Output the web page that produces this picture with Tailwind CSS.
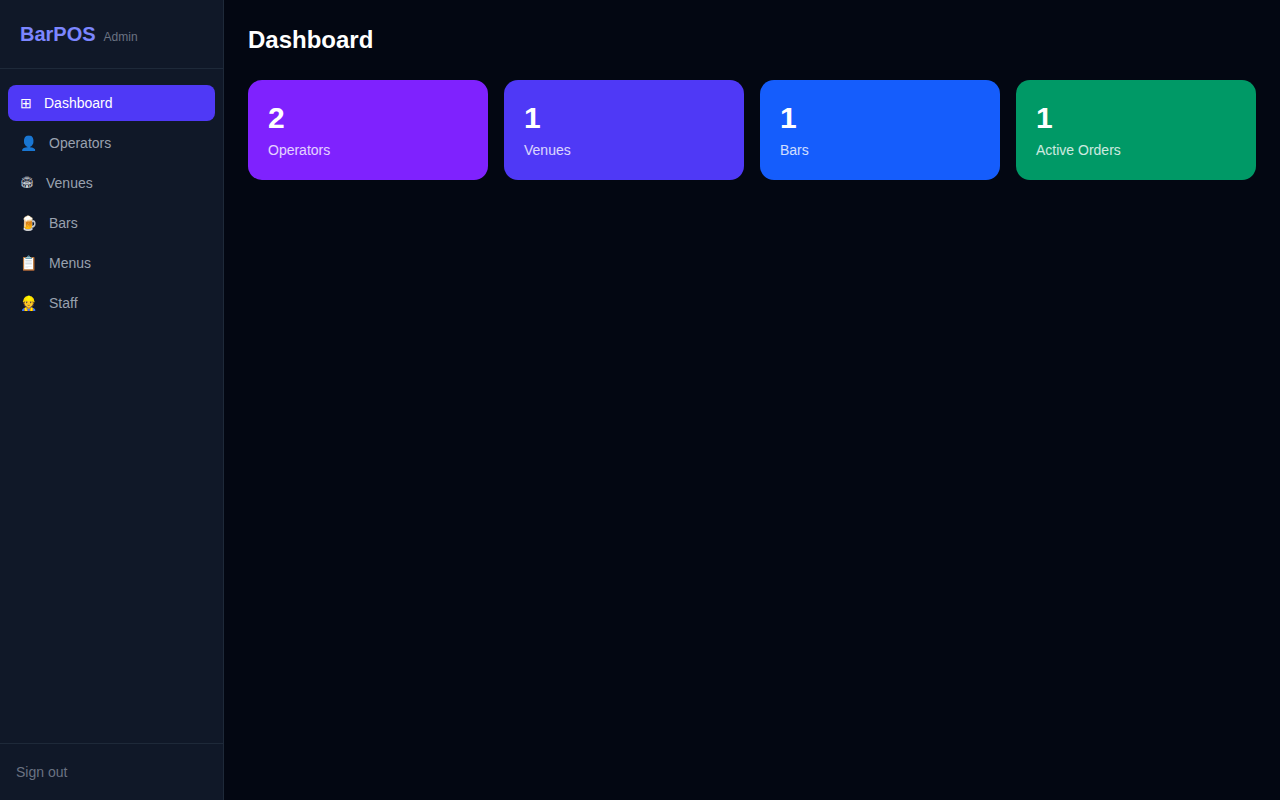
<!DOCTYPE html>
<html lang="en">
<head>
    <meta charset="UTF-8">
    <title>BarPOS Admin</title>
    <script src="https://cdn.jsdelivr.net/npm/@tailwindcss/browser@4"></script>
</head>
<body class="bg-gray-950 text-white font-['Liberation_Sans',Arial,sans-serif]">
    <div class="flex h-screen">
        <!-- Sidebar -->
        <aside class="w-56 shrink-0 flex flex-col bg-gray-900 border-r border-gray-800">
            <div class="px-5 py-5 border-b border-gray-800 h-[69px] flex items-baseline gap-2">
                <span class="text-xl font-bold text-indigo-400">BarPOS</span>
                <span class="text-xs text-gray-500">Admin</span>
            </div>
            <nav class="flex-1 p-2 pt-4 flex flex-col gap-1">
                <a class="flex items-center gap-3 px-3 py-2 rounded-lg text-sm bg-indigo-600 text-white"><span>⊞</span><span>Dashboard</span></a>
                <a class="flex items-center gap-3 px-3 py-2 rounded-lg text-sm text-gray-400"><span>👤</span><span>Operators</span></a>
                <a class="flex items-center gap-3 px-3 py-2 rounded-lg text-sm text-gray-400"><span class="text-[11px] text-gray-300">🏟</span><span>Venues</span></a>
                <a class="flex items-center gap-3 px-3 py-2 rounded-lg text-sm text-gray-400"><span>🍺</span><span>Bars</span></a>
                <a class="flex items-center gap-3 px-3 py-2 rounded-lg text-sm text-gray-400"><span>📋</span><span>Menus</span></a>
                <a class="flex items-center gap-3 px-3 py-2 rounded-lg text-sm text-gray-400"><span>👷</span><span>Staff</span></a>
            </nav>
            <div class="p-4 border-t border-gray-800">
                <button class="block text-sm leading-6 text-gray-500">Sign out</button>
            </div>
        </aside>

        <!-- Main -->
        <main class="flex-1 p-6">
            <h1 class="text-2xl font-bold mb-6">Dashboard</h1>
            <div class="grid grid-cols-4 gap-4">
                <div class="bg-violet-600 rounded-[14px] p-5">
                    <div class="text-3xl font-bold">2</div>
                    <div class="text-sm text-white/80 mt-1">Operators</div>
                </div>
                <div class="bg-indigo-600 rounded-[14px] p-5">
                    <div class="text-3xl font-bold">1</div>
                    <div class="text-sm text-white/80 mt-1">Venues</div>
                </div>
                <div class="bg-blue-600 rounded-[14px] p-5">
                    <div class="text-3xl font-bold">1</div>
                    <div class="text-sm text-white/80 mt-1">Bars</div>
                </div>
                <div class="bg-emerald-600 rounded-[14px] p-5">
                    <div class="text-3xl font-bold">1</div>
                    <div class="text-sm text-white/80 mt-1">Active Orders</div>
                </div>
            </div>
        </main>
    </div>
</body>
</html>
